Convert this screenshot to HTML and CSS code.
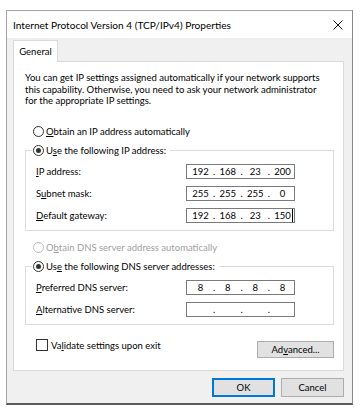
FILE: index.html
```html
<!DOCTYPE html>
<html lang="en">
<head>
    <meta charset="UTF-8">
    <title>Internet Protocol Version 4 (TCP/IPv4) Properties</title>
    <link rel="stylesheet" href="styles.css">
</head>
<body>
    <div class="window">
        <div class="titlebar">
            <span class="title">Internet Protocol Version 4 (TCP/IPv4) Properties</span>
            <svg class="close" width="10" height="10" viewBox="0 0 10 10">
                <path d="M0.5 0.5 L9.5 9.5 M9.5 0.5 L0.5 9.5" stroke="#111" stroke-width="1" fill="none"/>
            </svg>
        </div>

        <div class="dialog-body">
            <div class="tabs">
                <div class="tab">General</div>
            </div>

            <div class="panel">
                <p class="intro">You can get IP settings assigned automatically if your network supports<br>this capability. Otherwise, you need to ask your network administrator<br>for the appropriate IP settings.</p>

                <label class="radio first-radio"><span class="circle"></span><span><u>O</u>btain an IP address automatically</span></label>

                <fieldset class="group">
                    <legend><label class="radio checked"><span class="circle"></span><span>U<u>s</u>e the following IP address:</span></label></legend>
                    <div class="field-row">
                        <span class="field-label"><u>I</u>P address:</span>
                        <div class="ipbox"><span class="oct">192</span><span class="sep">.</span><span class="oct">168</span><span class="sep">.</span><span class="oct">23</span><span class="sep">.</span><span class="oct">200</span></div>
                    </div>
                    <div class="field-row">
                        <span class="field-label">S<u>u</u>bnet mask:</span>
                        <div class="ipbox"><span class="oct">255</span><span class="sep">.</span><span class="oct">255</span><span class="sep">.</span><span class="oct">255</span><span class="sep">.</span><span class="oct">0</span></div>
                    </div>
                    <div class="field-row">
                        <span class="field-label"><u>D</u>efault gateway:</span>
                        <div class="ipbox"><span class="oct">192</span><span class="sep">.</span><span class="oct">168</span><span class="sep">.</span><span class="oct">23</span><span class="sep">.</span><span class="oct">150<span class="caret"></span></span></div>
                    </div>
                </fieldset>

                <label class="radio disabled dns-radio"><span class="circle"></span><span>O<u>b</u>tain DNS server address automatically</span></label>

                <fieldset class="group">
                    <legend><label class="radio checked"><span class="circle"></span><span>Us<u>e</u> the following DNS server addresses:</span></label></legend>
                    <div class="field-row">
                        <span class="field-label"><u>P</u>referred DNS server:</span>
                        <div class="ipbox"><span class="oct">8</span><span class="sep">.</span><span class="oct">8</span><span class="sep">.</span><span class="oct">8</span><span class="sep">.</span><span class="oct">8</span></div>
                    </div>
                    <div class="field-row">
                        <span class="field-label"><u>A</u>lternative DNS server:</span>
                        <div class="ipbox"><span class="oct"></span><span class="sep">.</span><span class="oct"></span><span class="sep">.</span><span class="oct"></span><span class="sep">.</span><span class="oct"></span></div>
                    </div>
                </fieldset>

                <div class="options-row">
                    <label class="check"><span class="box"></span><span>Va<u>l</u>idate settings upon exit</span></label>
                    <button class="btn advanced">Ad<u>v</u>anced...</button>
                </div>
            </div>

            <div class="footer">
                <button class="btn default">OK</button>
                <button class="btn">Cancel</button>
            </div>
        </div>
    </div>
</body>
</html>
```

FILE: styles.css
```css
/* Reset */
* {
    margin: 0;
    padding: 0;
    box-sizing: border-box;
}

body {
    background: #fff;
    font-family: 'Lato', 'Noto Sans', sans-serif;
    font-size: 9.5px;
    color: #000;
}

u {
    text-decoration: underline;
    text-underline-offset: 1px;
}

/* Window frame */
.window {
    margin: 10px 0 0 6px;
    width: 347px;
    border: 1px solid #a3a3a3;
    border-bottom: 2px solid #5a5a5a;
    border-right: 1px solid #8a8a8a;
    background: #f0f0f0;
}

.titlebar {
    height: 27px;
    background: #fff;
    display: flex;
    align-items: center;
    justify-content: space-between;
    padding: 0 9px 0 6px;
}

.title {
    font-size: 10.1px;
    white-space: nowrap;
}

.close {
    display: block;
}

/* Dialog body */
.dialog-body {
    padding: 2px 8px 6px 6px;
}

.tabs {
    display: flex;
}

.tab {
    position: relative;
    height: 22px;
    width: 45px;
    margin-bottom: -1px;
    border: 1px solid #d9d9d9;
    border-bottom: none;
    background: #fff;
    display: flex;
    align-items: center;
    justify-content: center;
    padding-bottom: 1px;
}

.panel {
    width: 331px;
    background: #fff;
    border: 1px solid #d9d9d9;
    padding: 10px 9px 12px 11px;
}

.intro {
    line-height: 11.6px;
    white-space: nowrap;
}

/* Radio buttons */
.radio {
    display: flex;
    align-items: center;
    gap: 2px;
    height: 15px;
    white-space: nowrap;
}

.radio .circle {
    width: 11px;
    height: 11px;
    border: 1px solid #333;
    border-radius: 50%;
    display: flex;
    align-items: center;
    justify-content: center;
    background: #fff;
}

.radio.checked .circle::after {
    content: "";
    width: 5px;
    height: 5px;
    border-radius: 50%;
    background: #333;
}

.radio.disabled {
    color: #a0a0a0;
}

.radio.disabled .circle {
    border-color: #bcbcbc;
}

.first-radio {
    margin: 17px 0 0 8px;
}

.dns-radio {
    margin: 9px 0 0 8px;
}

/* Group boxes */
.group {
    margin-top: 4px;
    border: 1px solid #dcdcdc;
    padding: 6px 10px 7px 10px;
}

.group legend {
    margin-left: -4px;
    padding: 0 4px 0 1px;
}

.field-row {
    display: flex;
    align-items: center;
    height: 15px;
}

.field-row + .field-row {
    margin-top: 7px;
}

.field-label {
    width: 150px;
    white-space: nowrap;
}

.ipbox {
    width: 109px;
    height: 15px;
    border: 1px solid #7a7a7a;
    display: flex;
    align-items: center;
    padding-left: 2px;
}

.ipbox .oct {
    width: 23px;
    height: 13px;
    line-height: 13px;
    text-align: center;
    position: relative;
}

.ipbox .sep {
    width: 4.5px;
    text-align: center;
}

.caret {
    position: absolute;
    top: 0;
    right: 1px;
    width: 1px;
    height: 13px;
    background: #000;
}

/* Checkbox + advanced */
.options-row {
    margin-top: 14px;
    display: flex;
    justify-content: space-between;
    align-items: flex-start;
    padding: 0 0 0 11px;
}

.check {
    display: flex;
    align-items: center;
    gap: 3px;
    height: 13px;
    white-space: nowrap;
}

.check .box {
    width: 12px;
    height: 12px;
    border: 1px solid #333;
    background: #fff;
}

/* Buttons */
.btn {
    font-family: inherit;
    font-size: 9.5px;
    color: #000;
    background: #e1e1e1;
    border: 1px solid #adadad;
    height: 19px;
}

.advanced {
    width: 77px;
    height: 17px;
    margin-top: 2px;
}

.footer {
    display: flex;
    justify-content: flex-end;
    gap: 6px;
    margin-top: 7px;
}

.footer .btn {
    width: 63px;
}

.btn.default {
    border: 2px solid #0078d7;
}
```
